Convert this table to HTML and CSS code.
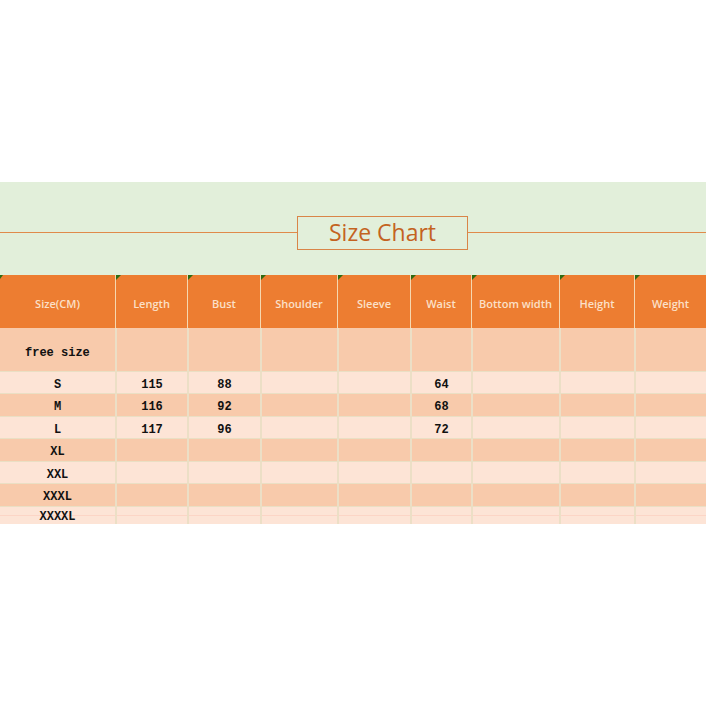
FILE: index.html
```html
<!DOCTYPE html>
<html>
<head>
<meta charset="utf-8">
<link rel="stylesheet" href="styles.css">
</head>
<body>
<div class="page">
  <div class="banner">
    <div class="title-line">
      <span class="rule"></span>
      <span class="title">Size Chart</span>
      <span class="rule"></span>
    </div>
  </div>
  <div class="chart">
    <div class="row head">
      <div class="cell">Size(CM)</div>
      <div class="cell mark">Length</div>
      <div class="cell mark">Bust</div>
      <div class="cell mark">Shoulder</div>
      <div class="cell mark">Sleeve</div>
      <div class="cell mark">Waist</div>
      <div class="cell mark">Bottom width</div>
      <div class="cell mark">Height</div>
      <div class="cell mark">Weight</div>
    </div>
    <div class="row dark free">
      <div class="cell first">free size</div>
      <div class="cell"></div><div class="cell"></div><div class="cell"></div><div class="cell"></div><div class="cell"></div><div class="cell"></div><div class="cell"></div><div class="cell"></div>
    </div>
    <div class="row light">
      <div class="cell">S</div><div class="cell">115</div><div class="cell">88</div><div class="cell"></div><div class="cell"></div><div class="cell">64</div><div class="cell"></div><div class="cell"></div><div class="cell"></div>
    </div>
    <div class="row dark">
      <div class="cell">M</div><div class="cell">116</div><div class="cell">92</div><div class="cell"></div><div class="cell"></div><div class="cell">68</div><div class="cell"></div><div class="cell"></div><div class="cell"></div>
    </div>
    <div class="row light">
      <div class="cell">L</div><div class="cell">117</div><div class="cell">96</div><div class="cell"></div><div class="cell"></div><div class="cell">72</div><div class="cell"></div><div class="cell"></div><div class="cell"></div>
    </div>
    <div class="row dark">
      <div class="cell">XL</div><div class="cell"></div><div class="cell"></div><div class="cell"></div><div class="cell"></div><div class="cell"></div><div class="cell"></div><div class="cell"></div><div class="cell"></div>
    </div>
    <div class="row light">
      <div class="cell">XXL</div><div class="cell"></div><div class="cell"></div><div class="cell"></div><div class="cell"></div><div class="cell"></div><div class="cell"></div><div class="cell"></div><div class="cell"></div>
    </div>
    <div class="row dark">
      <div class="cell">XXXL</div><div class="cell"></div><div class="cell"></div><div class="cell"></div><div class="cell"></div><div class="cell"></div><div class="cell"></div><div class="cell"></div><div class="cell"></div>
    </div>
    <div class="row light last">
      <div class="cell">XXXXL</div><div class="cell"></div><div class="cell"></div><div class="cell"></div><div class="cell"></div><div class="cell"></div><div class="cell"></div><div class="cell"></div><div class="cell"></div>
    </div>
  </div>
</div>
</body>
</html>
```
FILE: styles.css
```css
html, body {
  margin: 0;
  padding: 0;
  background: #ffffff;
}
.page {
  width: 706px;
  height: 706px;
  padding-top: 182px;
  box-sizing: border-box;
}
.banner {
  height: 93px;
  background: #e2efda;
  box-sizing: border-box;
  padding-top: 34px;
}
.title-line {
  display: flex;
  align-items: center;
  height: 34px;
}
.rule {
  flex: 1;
  height: 1px;
  background: #e08a4a;
  margin-bottom: 2px;
}
.rule:first-child {
  flex: 0 0 297px;
}
.title {
  width: 171px;
  height: 34px;
  box-sizing: border-box;
  border: 1px solid #d98548;
  display: flex;
  align-items: center;
  justify-content: center;
  font-family: "Open Sans", "Liberation Sans", sans-serif;
  font-size: 23px;
  color: #c4631f;
  padding-bottom: 2px;
}
.chart {
  display: flex;
  flex-direction: column;
}
.row {
  display: grid;
  grid-template-columns: 115px 72px 73px 77px 73px 61px 88px 75px 72px;
  height: 22px;
  border-bottom: 1px solid #eadfc4;
  box-sizing: border-box;
  overflow: hidden;
}
.cell {
  display: flex;
  align-items: center;
  justify-content: center;
  font-family: "Liberation Mono", "DejaVu Sans Mono", monospace;
  font-weight: bold;
  font-size: 12px;
  line-height: 13px;
  color: #111;
  border-left: 2px solid #ecdfc6;
  position: relative;
  padding-top: 5px;
}
.row .cell:first-child {
  border-left: none;
}
.head {
  height: 53px;
  background: #ed7d31;
  border-bottom: none;
}
.head .cell {
  font-family: "Open Sans", "Lato", sans-serif;
  font-weight: 600;
  font-size: 11px;
  color: #fbe0c8;
  border-left: 1px solid #f6d8b0;
  padding-top: 4px;
}
.head .mark::before {
  content: "";
  position: absolute;
  left: 0;
  top: 0;
  border-top: 5px solid #2e6b12;
  border-right: 5px solid transparent;
}
.head .cell:first-child::before {
  content: "";
  position: absolute;
  left: 0;
  top: 0;
  border-top: 4px solid #2e6b12;
  border-right: 3px solid transparent;
}
.dark {
  background: #f8caab;
  height: 23px;
}
.light {
  background: #fde4d6;
}
.free {
  height: 44px;
}
.free .first {
  justify-content: flex-start;
  padding-left: 25px;
  padding-top: 7px;
}
.last {
  height: 17px;
  border-bottom: none;
  background: linear-gradient(#fde4d6 0, #fde4d6 8px, #fcd5c6 8px, #fcd5c6 9px, #fde4d6 9px);
}
.last .cell {
  padding-top: 4px;
}
```
